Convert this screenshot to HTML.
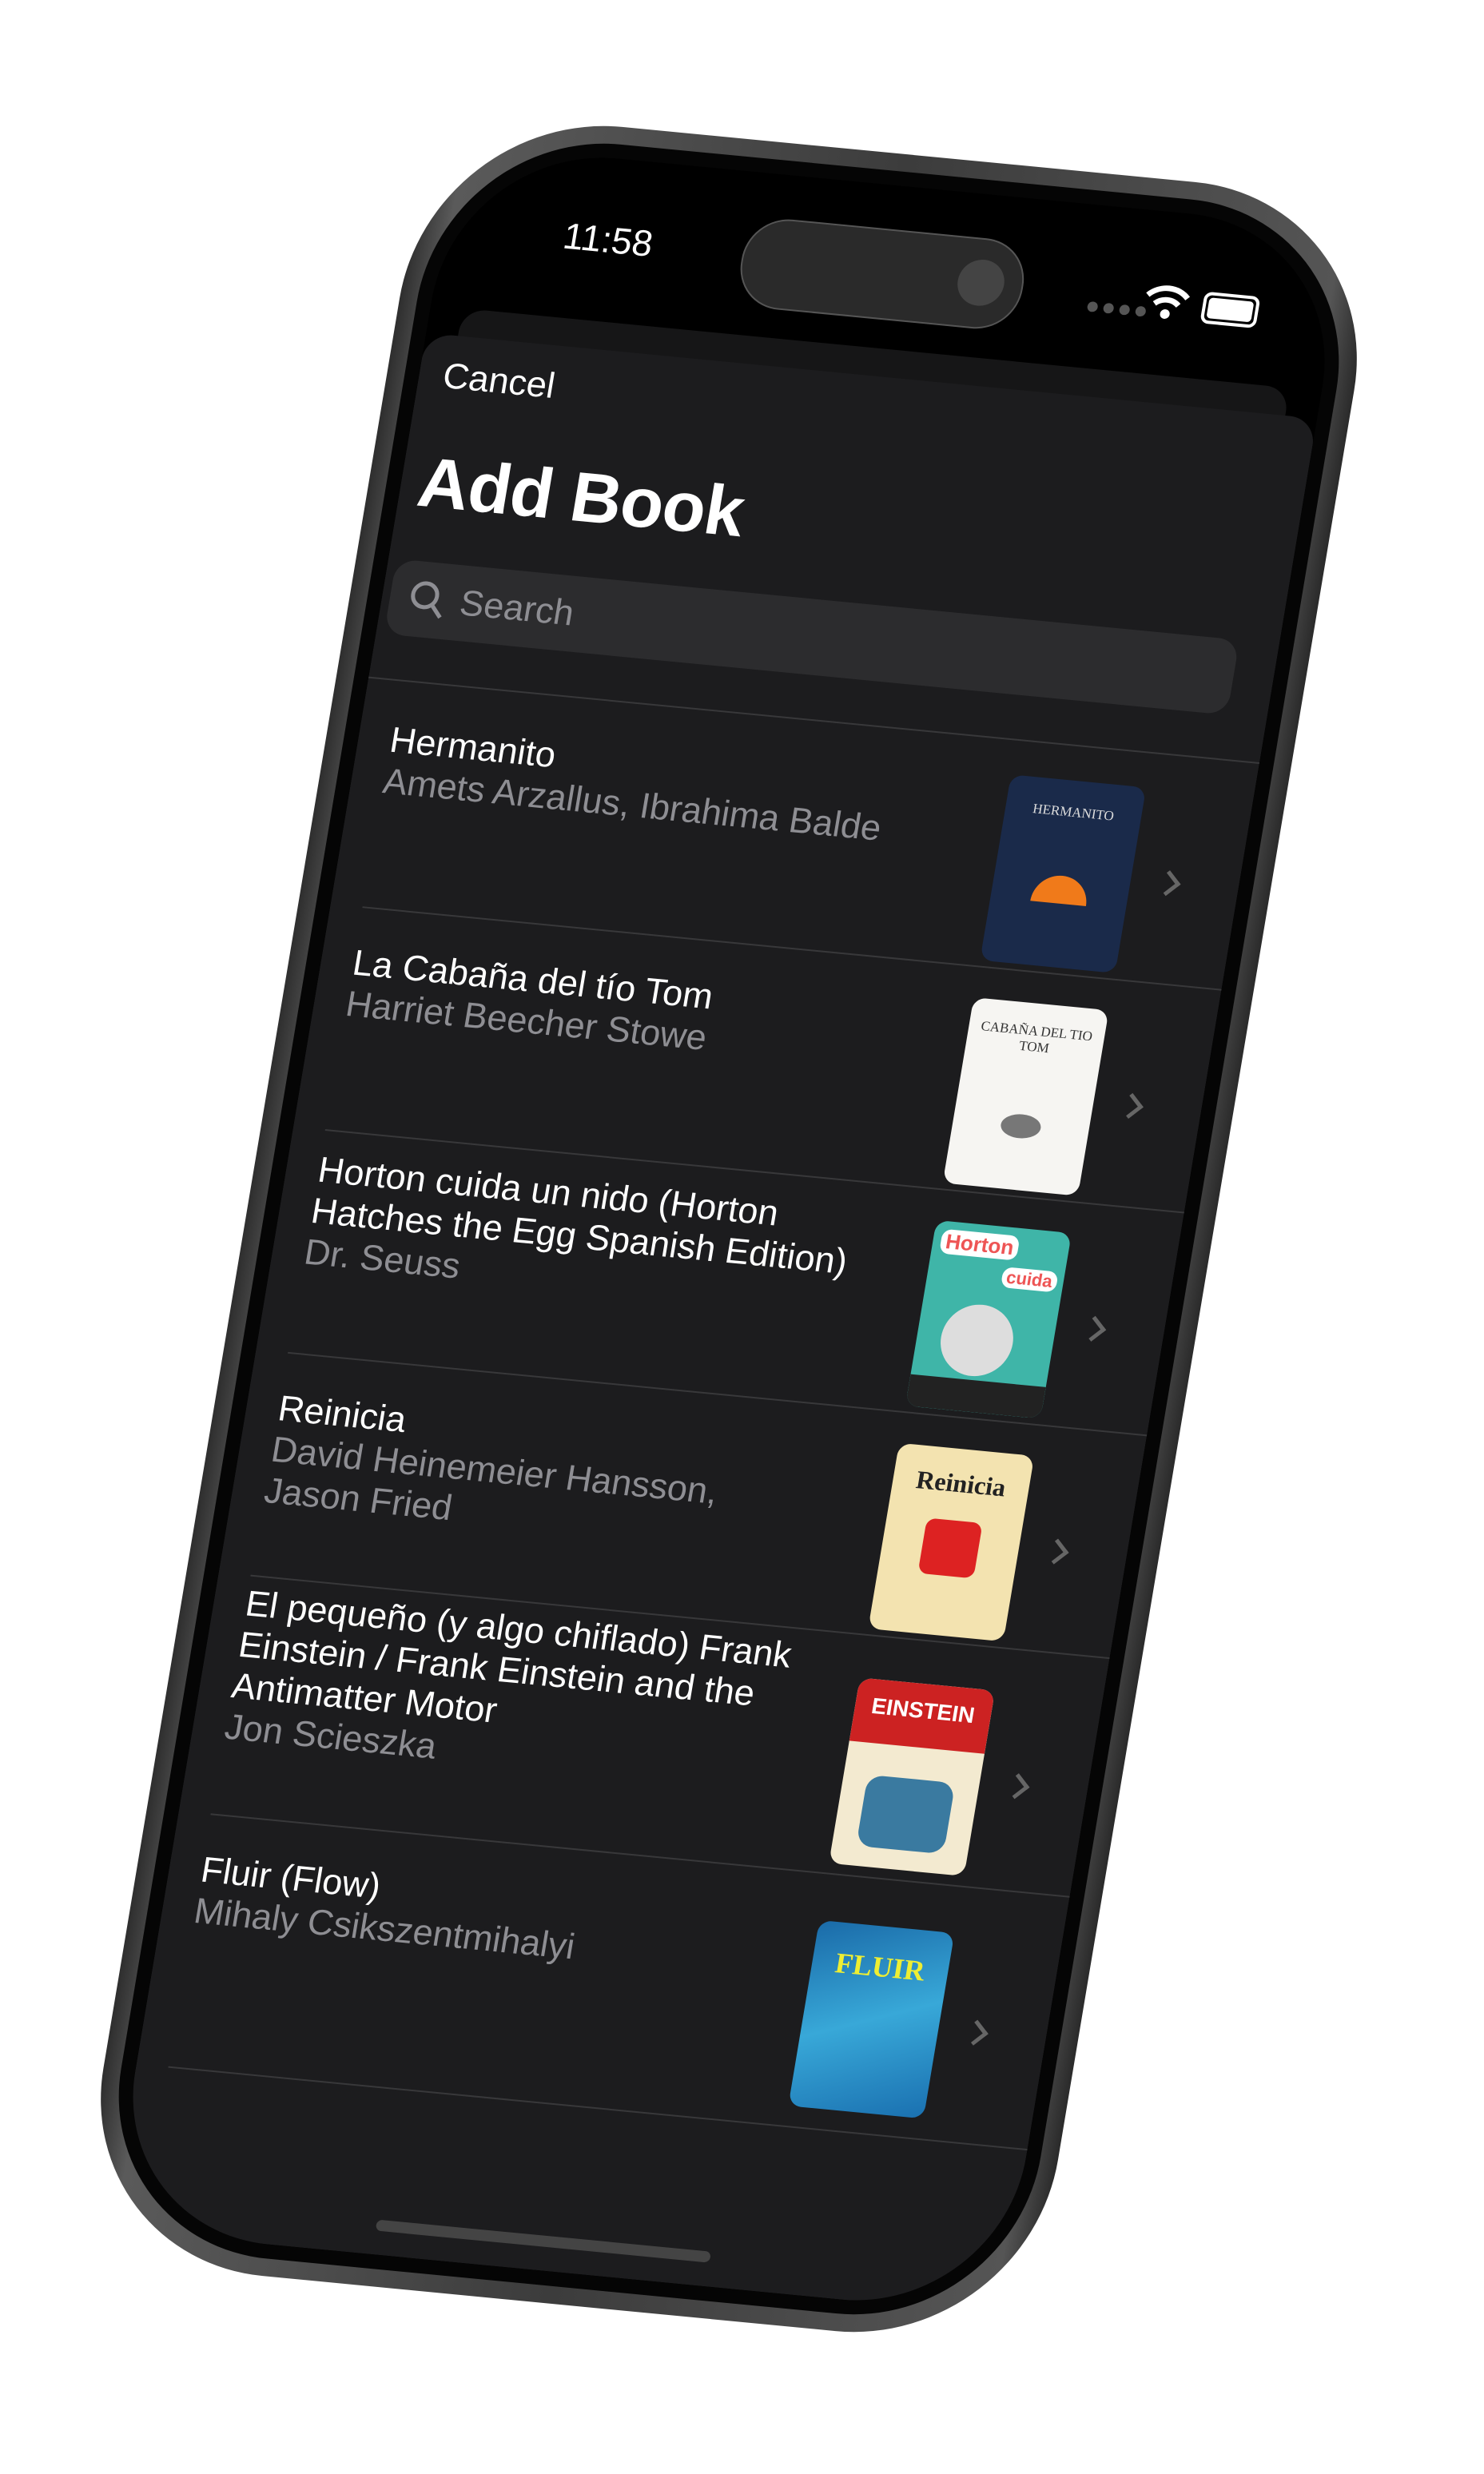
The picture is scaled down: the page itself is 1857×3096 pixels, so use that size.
<!DOCTYPE html>
<html><head><meta charset="utf-8"><style>
html,body{margin:0;padding:0;background:#fff;}
body{width:1857px;height:3096px;position:relative;overflow:hidden;font-family:"Liberation Sans",sans-serif;}
#phone{position:absolute;left:312px;top:178px;width:1200px;height:2720px;transform:rotate(5.5deg) skewX(-4deg);transform-origin:600px 1360px;border-radius:240px;background:linear-gradient(90deg,#2e2e2e,#5a5a5a 4%,#3c3c3c 50%,#555 96%,#2a2a2a);}
#bezel{position:absolute;left:22px;top:22px;right:22px;bottom:22px;border-radius:220px;background:#050505;}
#screen{position:absolute;left:40px;top:40px;right:40px;bottom:40px;border-radius:200px;background:#000;overflow:hidden;}
.island{position:absolute;left:375px;top:55px;width:350px;height:110px;border-radius:55px;background:#2a2a2a;border:2px solid #555;}
.cam{position:absolute;right:22px;top:25px;width:58px;height:58px;border-radius:50%;background:#444;}
.time{position:absolute;left:150px;top:75px;color:#fff;font-size:46px;}
.card0{position:absolute;left:40px;right:40px;top:205px;height:200px;background:#161617;border-radius:30px;}
.card{position:absolute;left:0;right:0;top:240px;bottom:0;background:#1c1c1e;border-radius:34px 34px 0 0;}
.cancel{position:absolute;left:30px;top:25px;color:#fff;font-size:45px;}
.title{position:absolute;left:22px;top:135px;color:#fff;font-size:88px;font-weight:bold;letter-spacing:-1px;}
.search{position:absolute;left:10px;right:50px;top:285px;height:95px;background:#2c2c2e;border-radius:26px;}
.search span{position:absolute;left:88px;top:21px;color:#8e8e93;font-size:45px;}
.sep{position:absolute;height:2px;background:#38383a;right:0;}
.row{position:absolute;left:0;right:0;height:282px;}
.rt{position:absolute;left:40px;top:45px;width:730px;color:#fff;font-size:45px;line-height:52px;}
.rt div.s{color:#8e8e93;}
.cov{position:absolute;left:815px;top:40px;width:170px;height:235px;border-radius:16px;overflow:hidden;}
.chev{position:absolute;left:1020px;top:145px;width:18px;height:18px;border-right:5px solid #666;border-top:5px solid #666;transform:rotate(45deg);}
.home{position:absolute;left:330px;bottom:30px;width:420px;height:14px;border-radius:7px;background:#444;}
</style></head><body>
<div id="phone"><div id="bezel"></div>
<div id="screen">
 <div class="time">11:58</div>
 <div class="island"><div class="cam"></div></div>
 <div style="position:absolute;left:810px;top:110px;color:#555;font-size:30px;letter-spacing:2px">●●●●</div>
 <svg style="position:absolute;left:880px;top:88px" width="60" height="50" viewBox="0 0 60 50"><path d="M5 18 A35 35 0 0 1 55 18" stroke="#fff" stroke-width="7" fill="none"/><path d="M15 28 A22 22 0 0 1 45 28" stroke="#fff" stroke-width="7" fill="none"/><circle cx="30" cy="40" r="6" fill="#fff"/></svg>
 <div style="position:absolute;left:955px;top:95px;width:62px;height:32px;border:4px solid #fff;border-radius:10px"><div style="margin:3px;height:26px;background:#fff;border-radius:5px"></div></div>
 <div class="card0"></div>
 <div class="card">
  <div class="cancel">Cancel</div>
  <div class="title">Add Book</div>
  <div class="search"><svg style="position:absolute;left:22px;top:20px" width="50" height="55" viewBox="0 0 50 55"><circle cx="21" cy="22" r="15" stroke="#8e8e93" stroke-width="5" fill="none"/><path d="M32 34 L44 48" stroke="#8e8e93" stroke-width="5"/></svg><span>Search</span></div>
  <div class="sep" style="left:0;top:435px"></div>
  <div class="row" style="top:440px"><div class="rt">Hermanito<div class="s">Amets Arzallus, Ibrahima Balde</div></div>
   <div class="cov" style="background:#1a2a4a"><div style="position:absolute;left:50px;top:120px;width:70px;height:35px;border-radius:35px 35px 0 0;background:#f07a1a"></div><div style="position:absolute;top:30px;width:100%;text-align:center;color:#ddd;font-size:17px;font-family:'Liberation Serif',serif">HERMANITO</div></div><div class="chev"></div></div>
  <div class="sep" style="left:40px;top:722px"></div>
  <div class="row" style="top:722px"><div class="rt">La Cabaña del tío Tom<div class="s">Harriet Beecher Stowe</div></div>
   <div class="cov" style="background:#f6f5f2"><div style="position:absolute;top:25px;width:100%;text-align:center;color:#333;font-size:17px;font-family:'Liberation Serif',serif">CABAÑA DEL TIO TOM</div><div style="position:absolute;left:60px;top:140px;width:50px;height:30px;background:#777;border-radius:50%"></div></div><div class="chev"></div></div>
  <div class="sep" style="left:40px;top:1004px"></div>
  <div class="row" style="top:1004px"><div class="rt" style="top:25px">Horton cuida un nido (Horton Hatches the Egg Spanish Edition)<div class="s">Dr. Seuss</div></div>
   <div class="cov" style="background:#3fb5a8"><div style="position:absolute;left:10px;top:10px;font-size:26px;font-weight:bold;background:#fff;border-radius:12px;padding:0 6px;color:#e55">Horton</div><div style="position:absolute;right:8px;top:50px;font-size:22px;font-weight:bold;background:#fff;border-radius:12px;padding:0 6px;color:#e55">cuida</div><div style="position:absolute;left:30px;top:100px;width:90px;height:90px;background:#ddd;border-radius:50%"></div><div style="position:absolute;bottom:0;width:100%;height:40px;background:#222"></div></div><div class="chev"></div></div>
  <div class="sep" style="left:40px;top:1286px"></div>
  <div class="row" style="top:1286px"><div class="rt">Reinicia<div class="s">David Heinemeier Hansson,<br>Jason Fried</div></div>
   <div class="cov" style="background:#f3e3b0"><div style="position:absolute;top:25px;width:100%;text-align:center;color:#222;font-size:32px;font-weight:bold;font-family:'Liberation Serif',serif">Reinicia</div><div style="position:absolute;left:50px;top:90px;width:70px;height:70px;background:#d22;border-radius:12px"></div></div><div class="chev"></div></div>
  <div class="sep" style="left:40px;top:1568px"></div>
  <div class="row" style="top:1568px;height:300px"><div class="rt" style="top:10px">El pequeño (y algo chiflado) Frank Einstein / Frank Einstein and the Antimatter Motor<div class="s">Jon Scieszka</div></div>
   <div class="cov" style="background:#f3ead0;top:55px"><div style="position:absolute;top:0;width:100%;height:80px;background:#c22"></div><div style="position:absolute;top:18px;width:100%;text-align:center;color:#fff;font-size:28px;font-weight:bold">EINSTEIN</div><div style="position:absolute;left:30px;top:120px;width:110px;height:90px;background:#3a7aa0;border-radius:20px"></div></div><div class="chev" style="top:160px"></div></div>
  <div class="sep" style="left:40px;top:1870px"></div>
  <div class="row" style="top:1870px"><div class="rt">Fluir (Flow)<div class="s">Mihaly Csikszentmihalyi</div></div>
   <div class="cov" style="background:linear-gradient(160deg,#1a6aa8,#38a8d8 50%,#1a70b0);top:60px"><div style="position:absolute;top:30px;width:100%;text-align:center;color:#ee3;font-size:36px;font-weight:bold;font-family:'Liberation Serif',serif">FLUIR</div></div><div class="chev" style="top:170px"></div></div>
  <div class="sep" style="left:40px;top:2190px"></div>
 </div>
 <div class="home"></div>
</div></div>
</body></html>
